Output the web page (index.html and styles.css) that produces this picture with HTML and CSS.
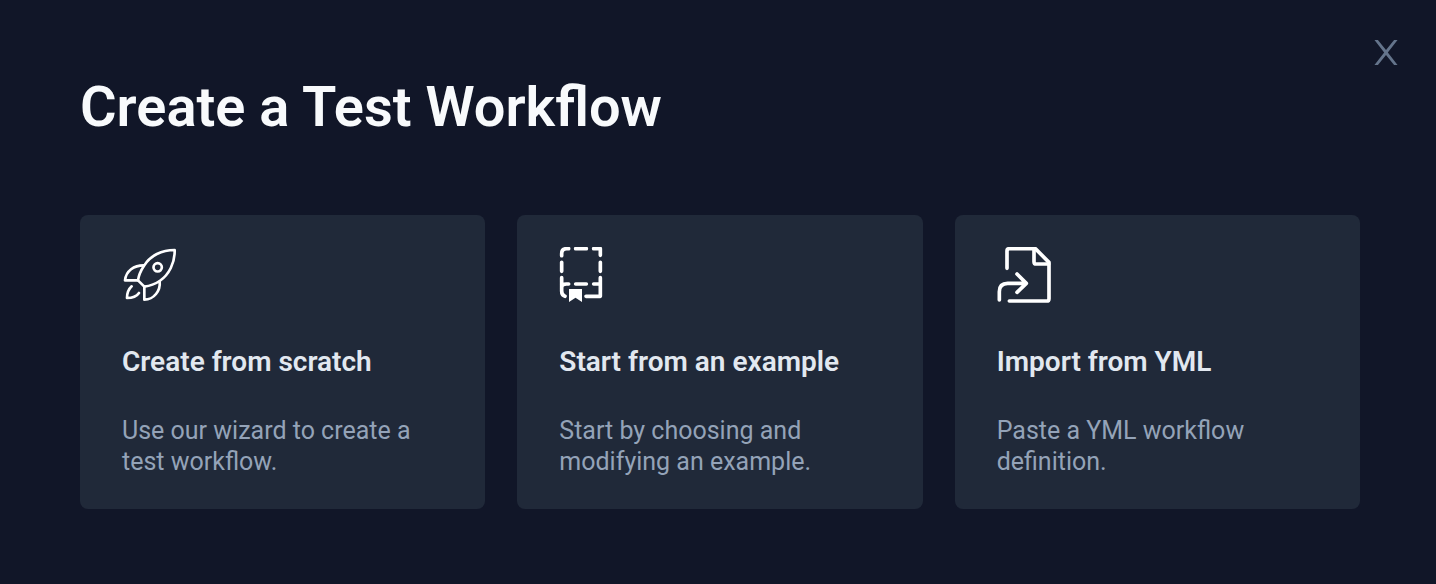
FILE: index.html
```html
<!DOCTYPE html>
<html lang="en">
<head>
<meta charset="utf-8">
<title>Create a Test Workflow</title>
<link rel="stylesheet" href="styles.css">
</head>
<body>
<main class="dialog" role="dialog" aria-labelledby="dialog-title">
  <button class="close" type="button" aria-label="Close">
    <svg class="close-icon" viewBox="0 0 24 26" aria-hidden="true"><path d="M0 0h3.6L12 10.400 20.400 0H24L13.900 12.900 24 26h-3.600L12 15.500 3.600 26H0l10.100-13.100z"/></svg>
  </button>
  <h1 class="title" id="dialog-title">Create a Test Workflow</h1>
  <div class="cards">
    <button class="card" type="button">
      <svg class="icon" viewBox="36 36 180 180" stroke-width="8" aria-hidden="true">
        <path d="M194 45C155 45 121 62 103 91C93 106 86 121 84 136L103 155C118 153 134 148 149 138C177 119 195 84 194 45Z"/>
        <circle cx="143" cy="97" r="12.5"/>
        <path d="M101 91C72 91 48 107 45 136H84M103 155V194C132 194 152 167 149 139"/>
        <path d="M65 154C54 164 51 174 51 189C66 189 78 187 87 174"/>
      </svg>
      <span class="card-title">Create from scratch</span>
      <span class="card-text">Use our wizard to create a test workflow.</span>
    </button>
    <button class="card" type="button">
      <svg class="icon" viewBox="42 36 180 180" stroke-width="11" aria-hidden="true">
        <path d="M50 62V56Q50 41 65 41H71M92 41H124M146 41H166V61M50 82V109M166 82V109M50 128V168Q50 181 60 184M50 158Q50 147 64 147H71M92 147H124M146 147H166M166 128V184H123"/>
        <path class="solid" d="M72 162H111V201L91.500 188L72 201Z"/>
      </svg>
      <span class="card-title">Start from an example</span>
      <span class="card-text">Start by choosing and modifying an example.</span>
    </button>
    <button class="card" type="button">
      <svg class="icon" viewBox="36 36 180 180" stroke-width="11" aria-hidden="true">
        <path d="M66 100V48Q66 41 73 41H151L192 82V191Q192 198 185 198H73"/>
        <path d="M147 43V80Q147 87 154 87H191"/>
        <path d="M43 195V170Q43 145 68 145H124M96 117L124 145L96 172"/>
      </svg>
      <span class="card-title">Import from YML</span>
      <span class="card-text">Paste a YML workflow definition.</span>
    </button>
  </div>
</main>
</body>
</html>
```
FILE: styles.css
```css
* {
  box-sizing: border-box;
}

body {
  margin: 0;
  background: #111628;
  font-family: Roboto, "Liberation Sans", sans-serif;
}

.dialog {
  position: relative;
  min-height: 100vh;
  padding: 72px 76px 72px 80px;
}

.close {
  position: absolute;
  top: 32px;
  right: 30px;
  display: flex;
  padding: 8px;
  border: 0;
  background: none;
  cursor: pointer;
}

.close-icon {
  width: 24px;
  height: 25px;
  fill: #64748b;
}

.title {
  margin: 0 0 73px;
  color: #f8fafc;
  font-size: 56px;
  font-weight: 600;
  line-height: 70px;
}

.cards {
  display: grid;
  grid-template-columns: repeat(3, 1fr);
  gap: 32px;
}

.card {
  display: flex;
  flex-direction: column;
  align-items: flex-start;
  padding: 32px 42px;
  border: 0;
  border-radius: 8px;
  background: #202939;
  font-family: inherit;
  text-align: left;
  cursor: pointer;
}

.icon {
  width: 60px;
  height: 60px;
  fill: none;
  stroke: #fff;
  stroke-linecap: round;
  stroke-linejoin: round;
}

.solid {
  fill: #fff;
  stroke: none;
}

.card-title {
  margin: 36px 0 34px;
  color: #e2e8f0;
  font-size: 28px;
  font-weight: 600;
  line-height: 38px;
}

.card-text {
  color: #94a3b8;
  font-size: 25px;
  line-height: 31px;
}
```
